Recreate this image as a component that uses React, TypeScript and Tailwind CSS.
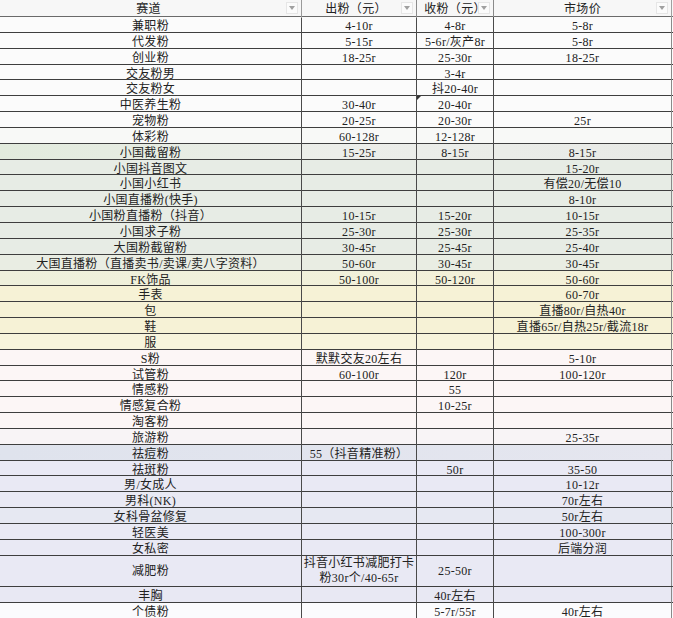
import React from "react";

type Row = {
  a: string;
  b?: React.ReactNode;
  c?: string;
  d?: string;
  bg: string;
  tall?: boolean;
  mark?: boolean;
};

const W = "bg-[#fbfbfb]";
const G = "bg-[#e7ece5]";
const Y = "bg-[#f6f2d6]";
const P = "bg-[#fcf6f6]";
const L = "bg-[#e9e9f4]";

const rows: Row[] = [
  { a: "兼职粉", b: "4-10r", c: "4-8r", d: "5-8r", bg: W },
  { a: "代发粉", b: "5-15r", c: "5-6r/灰产8r", d: "5-8r", bg: W },
  { a: "创业粉", b: "18-25r", c: "25-30r", d: "18-25r", bg: W },
  { a: "交友粉男", c: "3-4r", bg: W },
  { a: "交友粉女", c: "抖20-40r", bg: W },
  { a: "中医养生粉", b: "30-40r", c: "20-40r", bg: W, mark: true },
  { a: "宠物粉", b: "20-25r", c: "20-30r", d: "25r", bg: W },
  { a: "体彩粉", b: "60-128r", c: "12-128r", bg: "bg-[#f8f9f7]" },
  { a: "小国截留粉", b: "15-25r", c: "8-15r", d: "8-15r", bg: "bg-linear-to-r from-[#e2ebdd] via-[#eceeea] to-[#e8eae6]" },
  { a: "小国抖音图文", d: "15-20r", bg: G },
  { a: "小国小红书", d: "有偿20/无偿10", bg: G },
  { a: "小国直播粉(快手)", d: "8-10r", bg: G },
  { a: "小国粉直播粉（抖音）", b: "10-15r", c: "15-20r", d: "10-15r", bg: G },
  { a: "小国求子粉", b: "25-30r", c: "25-30r", d: "25-35r", bg: G },
  { a: "大国粉截留粉", b: "30-45r", c: "25-45r", d: "25-40r", bg: G },
  { a: "大国直播粉（直播卖书/卖课/卖八字资料）", b: "50-60r", c: "30-45r", d: "30-45r", bg: "bg-[#e9ede3]" },
  { a: "FK饰品", b: "50-100r", c: "50-120r", d: "50-60r", bg: "bg-linear-to-r from-[#eef0dc] to-[#f5f1d8]" },
  { a: "手表", d: "60-70r", bg: Y },
  { a: "包", d: "直播80r/自热40r", bg: Y },
  { a: "鞋", d: "直播65r/自热25r/截流18r", bg: Y },
  { a: "服", bg: "bg-[#f7f4dc]" },
  { a: "S粉", b: "默默交友20左右", d: "5-10r", bg: P },
  { a: "试管粉", b: "60-100r", c: "120r", d: "100-120r", bg: P },
  { a: "情感粉", c: "55", bg: P },
  { a: "情感复合粉", c: "10-25r", bg: P },
  { a: "淘客粉", bg: P },
  { a: "旅游粉", d: "25-35r", bg: "bg-[#f8f4f6]" },
  { a: "祛痘粉", b: "55（抖音精准粉）", bg: "bg-linear-to-r from-[#dfe3ed] to-[#e5e6ef]" },
  { a: "祛斑粉", c: "50r", d: "35-50", bg: L },
  { a: "男/女成人", d: "10-12r", bg: L },
  { a: "男科(NK)", d: "70r左右", bg: L },
  { a: "女科骨盆修复", d: "50r左右", bg: "bg-[#e6e8f2]" },
  { a: "轻医美", d: "100-300r", bg: L },
  { a: "女私密", d: "后端分润", bg: L },
  {
    a: "减肥粉",
    b: (
      <div className="flex flex-col items-center leading-[15px]">
        <div>抖音小红书减肥打卡</div>
        <div>粉30r个/40-65r</div>
      </div>
    ),
    c: "25-50r",
    bg: L,
    tall: true,
  },
  { a: "丰胸", c: "40r左右", bg: "bg-[#e8e8f3]" },
  { a: "个债粉", c: "5-7r/55r", d: "40r左右", bg: "bg-[#fbfbfd]" },
];

function Filter() {
  return (
    <span className="absolute right-[3px] top-[2px] w-[12px] h-[12px] border border-[#e6e6e6] bg-[#fbfbfb] flex items-center justify-center">
      <svg width="6" height="4" viewBox="0 0 6 4">
        <path d="M0 0 L6 0 L3 4 Z" fill="#a0a0a0" />
      </svg>
    </span>
  );
}

const cell = "flex items-center justify-center whitespace-nowrap border-r";

export default function App() {
  return (
    <div className="w-[673px] h-[618px] overflow-hidden bg-white text-[12px] tracking-[0.3px] text-[#222] font-['Liberation_Serif','Noto_Sans_CJK_SC',serif]">
      <div className="grid grid-cols-[302px_115px_77px_178px] h-[17px] border-b border-[#6a6a6a] bg-[#f7f7f7]">
        <div className={`${cell} relative border-[#9a9a9a]`}>
          <span className="pr-[4px]">赛道</span>
          <Filter />
        </div>
        <div className={`${cell} relative border-[#8a8a8a]`}>
          <span className="pr-[6px]">出粉（元）</span>
          <Filter />
        </div>
        <div className={`${cell} relative overflow-hidden border-[#8a8a8a]`}>
          <span>收粉（元）</span>
          <Filter />
        </div>
        <div className={`${cell} relative border-[#a0a0a0]`}>
          <span>市场价</span>
          <Filter />
        </div>
      </div>
      {rows.map((r, i) => (
        <div
          key={i}
          className={`grid grid-cols-[302px_115px_77px_178px] border-b border-[#3e3e3e] ${r.tall ? "h-[31.7px]" : "h-[15.85px]"} ${r.bg}`}
        >
          <div className={`${cell} border-[#4a4a4a]`}>{r.a}</div>
          <div className={`${cell} border-[#4a4a4a]`}>{r.b}</div>
          <div className={`${cell} relative border-[#4a4a4a]`}>
            {r.mark && (
              <span className="absolute left-0 top-0 w-0 h-0 border-t-[4px] border-t-[#333] border-r-[4px] border-r-transparent" />
            )}
            {r.c}
          </div>
          <div className={`${cell} border-[#8a8a8a]`}>{r.d}</div>
        </div>
      ))}
    </div>
  );
}
